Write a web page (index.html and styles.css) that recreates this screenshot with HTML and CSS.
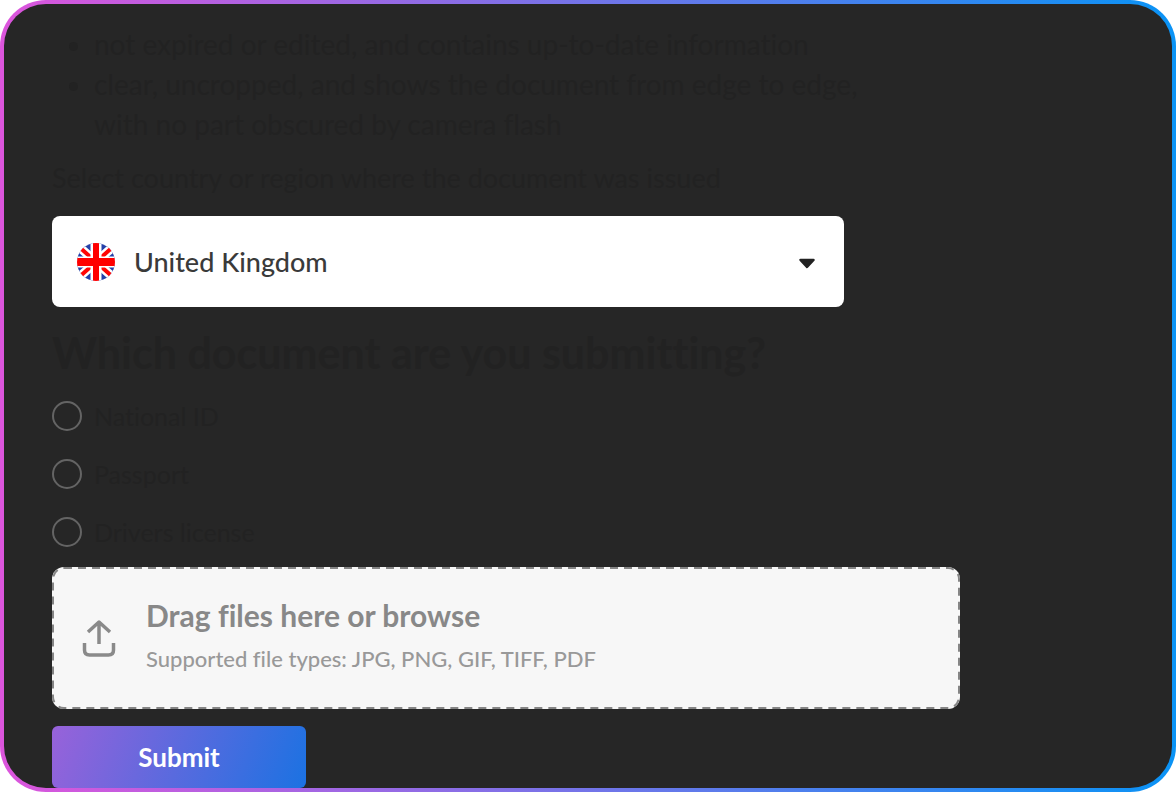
FILE: index.html
```html
<!DOCTYPE html>
<html lang="en">
<head>
<meta charset="utf-8">
<meta name="viewport" content="width=device-width, initial-scale=1">
<title>Submit a document</title>
<link rel="stylesheet" href="styles.css">
</head>
<body>
<div class="frame">
  <form class="panel">
    <ul class="rules">
      <li>not expired or edited, and contains up-to-date information</li>
      <li>clear, uncropped, and shows the document from edge to edge, with no part obscured by camera flash</li>
    </ul>
    <label class="country-label" for="country">Select country or region where the document was issued</label>
    <div class="country">
      <select id="country" class="country-select">
        <option>United Kingdom</option>
      </select>
      <svg class="flag" viewBox="0 0 38 38" aria-hidden="true">
        <clipPath id="round"><circle cx="19" cy="19" r="19"/></clipPath>
        <g clip-path="url(#round)">
          <rect width="38" height="38" fill="#2440a8"/>
          <path d="M0 2L38 36M38 2L0 36" stroke="#fff" stroke-width="9"/>
          <path d="M0 2L38 36M38 2L0 36" stroke="#ff0505" stroke-width="4"/>
          <path d="M19 0V38M0 19H38" stroke="#fff" stroke-width="11"/>
          <path d="M19 0V38" stroke="#ff0000" stroke-width="6"/>
          <path d="M0 19H38" stroke="#ff0000" stroke-width="8"/>
        </g>
      </svg>
      <svg class="caret" viewBox="0 0 18 12" aria-hidden="true">
        <path d="M2.500 2H15.500L9 9Z" fill="#222" stroke="#222" stroke-width="2.500" stroke-linejoin="round"/>
      </svg>
    </div>
    <fieldset class="documents">
      <legend class="question">Which document are you submitting?</legend>
      <label class="choice"><input class="radio" type="radio" name="document">National ID</label>
      <label class="choice"><input class="radio" type="radio" name="document">Passport</label>
      <label class="choice"><input class="radio" type="radio" name="document">Drivers license</label>
    </fieldset>
    <label class="dropzone">
      <input class="file" type="file">
      <svg class="outline" aria-hidden="true"><rect class="dashes" x="1" y="1" rx="11"/></svg>
      <svg class="upload" viewBox="0 0 34 38" aria-hidden="true">
        <path d="M17 25V3M6 13L17 3L28 13M2.500 24V31Q2.500 36 7.500 36H26.500Q31.500 36 31.500 31V24" fill="none" stroke="#8a8a8a" stroke-width="3.500" stroke-linejoin="round"/>
      </svg>
      <span class="drop-text">
        <span class="drop-title">Drag files here or browse</span>
        <span class="drop-types">Supported file types: JPG, PNG, GIF, TIFF, PDF</span>
      </span>
    </label>
    <button class="submit" type="button">Submit</button>
  </form>
</div>
</body>
</html>
```
FILE: styles.css
```css
* {
  box-sizing: border-box;
}

body {
  margin: 0;
  background: #fff;
  font-family: Lato, "Liberation Sans", sans-serif;
  font-variant-ligatures: none;
  color: #222;
}

.frame {
  display: flex;
  min-height: 100vh;
  padding: 4px;
  border-radius: 46px;
  background: linear-gradient(90deg, #dc55dc, #0a93f5);
}

.panel {
  flex: 1;
  display: flex;
  flex-direction: column;
  padding: 20px 48px 0;
  border-radius: 42px;
  background: #262626;
}

.rules {
  max-width: 840px;
  margin: 0;
  padding: 0 0 0 42px;
  font-size: 28px;
  line-height: 40px;
}

.country-label {
  margin-top: 16px;
  font-size: 27px;
  line-height: 36px;
}

.country {
  position: relative;
  max-width: 792px;
  margin-top: 20px;
}

.country-select {
  display: block;
  width: 100%;
  height: 91px;
  padding: 0 60px 0 82px;
  border: 0;
  border-radius: 8px;
  background: #fff;
  color: #3a3a3a;
  font-family: inherit;
  font-size: 27px;
  font-weight: 500;
  appearance: none;
}

.flag {
  position: absolute;
  top: 27px;
  left: 25px;
  width: 38px;
  height: 38px;
  pointer-events: none;
}

.caret {
  position: absolute;
  top: 42px;
  right: 28px;
  width: 18px;
  height: 12px;
  pointer-events: none;
}

.documents {
  display: flex;
  flex-direction: column;
  gap: 28px;
  margin: 22px 0 0;
  padding: 0;
  border: 0;
}

.question {
  margin-bottom: 24px;
  padding: 0;
  font-size: 43px;
  font-weight: 700;
  line-height: 48px;
}

.choice {
  display: flex;
  align-items: center;
  gap: 12px;
  height: 30px;
  font-size: 25px;
}

.radio {
  width: 30px;
  height: 30px;
  margin: 0;
  border: 2px solid #646464;
  border-radius: 50%;
  appearance: none;
}

.radio:checked {
  background: radial-gradient(circle, #aaa 40%, transparent 45%);
}

.dropzone {
  position: relative;
  display: flex;
  align-items: center;
  gap: 30px;
  max-width: 908px;
  min-height: 142px;
  margin-top: 20px;
  padding: 0 30px;
  border-radius: 12px;
  background: #f7f7f7;
}

.file {
  position: absolute;
  width: 1px;
  height: 1px;
  opacity: 0;
}

.outline {
  position: absolute;
  inset: 0;
  width: 100%;
  height: 100%;
}

.dashes {
  width: calc(100% - 2px);
  height: calc(100% - 2px);
  fill: none;
  stroke: #858585;
  stroke-width: 2px;
  stroke-dasharray: 8 6;
}

.upload {
  width: 34px;
  height: 38px;
}

.drop-text {
  display: flex;
  flex-direction: column;
  gap: 8px;
  padding-bottom: 4px;
}

.drop-title {
  color: #888;
  font-size: 30px;
  font-weight: 700;
  line-height: 38px;
}

.drop-types {
  color: #999;
  font-size: 22px;
  font-weight: 500;
  line-height: 34px;
}

.submit {
  width: 254px;
  height: 62px;
  margin-top: 17px;
  border: 0;
  border-radius: 6px;
  background: linear-gradient(110deg, #9862da, #1b72e2);
  color: #fff;
  font-family: inherit;
  font-size: 26px;
  font-weight: 700;
}
```
